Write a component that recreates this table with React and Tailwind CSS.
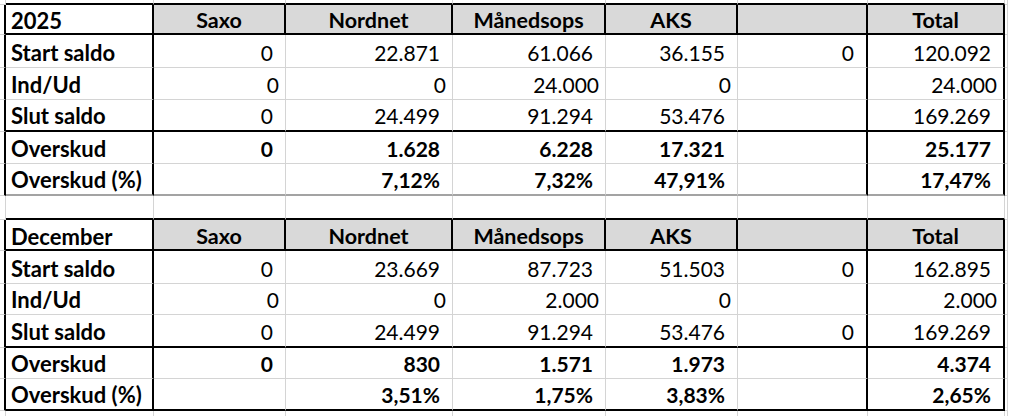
import React from "react";

const R = {
  g: "border-r border-r-[#d4d4d4]",
  k: "border-r-2 border-r-black",
  n: "",
};
const B = {
  g: "border-b border-b-[#d4d4d4]",
  k: "border-b-2 border-b-black",
  d: "border-b-2 border-b-[#a3a3a3]",
  n: "",
};

const HEAD = ["Saxo", "Nordnet", "Månedsops", "AKS", "", "Total"];

const tables = [
  {
    title: "2025",
    rows: [
      { label: "Start saldo", vals: ["0", "22.871", "61.066", "36.155", "0", "120.092"], h: "h-[33px]", b: "g" },
      { label: "Ind/Ud", vals: ["0", "0", "24.000", "0", "", "24.000"], h: "h-[32px]", b: "g", tight: true },
      { label: "Slut saldo", vals: ["0", "24.499", "91.294", "53.476", "", "169.269"], h: "h-[32px]", b: "k" },
      { label: "Overskud", vals: ["0", "1.628", "6.228", "17.321", "", "25.177"], h: "h-[32px]", b: "g", bold: true },
      { label: "Overskud (%)", vals: ["", "7,12%", "7,32%", "47,91%", "", "17,47%"], h: "h-[32px]", b: "d", bold: true },
    ],
    headH: "h-[30px]",
  },
  {
    title: "December",
    rows: [
      { label: "Start saldo", vals: ["0", "23.669", "87.723", "51.503", "0", "162.895"], h: "h-[33px]", b: "g" },
      { label: "Ind/Ud", vals: ["0", "0", "2.000", "0", "", "2.000"], h: "h-[31px]", b: "g", tight: true },
      { label: "Slut saldo", vals: ["0", "24.499", "91.294", "53.476", "0", "169.269"], h: "h-[33px]", b: "k" },
      { label: "Overskud", vals: ["0", "830", "1.571", "1.973", "", "4.374"], h: "h-[31px]", b: "g", bold: true },
      { label: "Overskud (%)", vals: ["", "3,51%", "1,75%", "3,83%", "", "2,65%"], h: "h-[32px]", b: "k", bold: true },
    ],
    headH: "h-[31px]",
  },
];

const DATA_R = ["k", "g", "g", "g", "g", "k", "k"];

function Cell({ h, r, b, className = "", children }) {
  return (
    <div className={`${h} ${R[r]} ${B[b]} flex items-end overflow-hidden whitespace-nowrap ${className}`}>
      {children}
    </div>
  );
}

function StubRow({ h, b }) {
  return (
    <>
      <Cell h={h} r="g" b="g" />
      {DATA_R.map((_, i) => (
        <Cell key={i} h={h} r="g" b={b} />
      ))}
      <Cell h={h} r="g" b="g" />
    </>
  );
}

function Table({ t }) {
  return (
    <>
      <Cell h={t.headH} r="k" b="g" />
      <Cell h={t.headH} r="k" b="k" className="justify-start pl-[5px] pb-[2px] font-bold text-[22px]">
        {t.title}
      </Cell>
      {HEAD.map((hd, i) => (
        <Cell key={i} h={t.headH} r="k" b="k" className="justify-center pb-[2px] font-bold bg-[#d9d9d9] text-[21.5px]">
          {hd}
        </Cell>
      ))}
      <Cell h={t.headH} r="g" b="g" />
      {t.rows.map((row, ri) => (
        <React.Fragment key={ri}>
          <Cell h={row.h} r="k" b="g" />
          <Cell h={row.h} r="k" b={row.b} className="justify-start pl-[5px] pb-[4px] font-bold text-[22px]">
            {row.label}
          </Cell>
          {row.vals.map((v, ci) => (
            <Cell
              key={ci}
              h={row.h}
              r={DATA_R[ci + 1]}
              b={row.b}
              className={`justify-end pb-[4px] ${row.tight ? "pr-[6px]" : "pr-[12px]"} ${row.bold ? "font-bold" : ""}`}
            >
              {v}
            </Cell>
          ))}
          <Cell h={row.h} r="g" b="g" />
        </React.Fragment>
      ))}
    </>
  );
}

export default function App() {
  return (
    <div className="w-[1010px] h-[416px] overflow-hidden bg-white text-black font-['Lato','Liberation_Sans',Arial,sans-serif] text-[21px] leading-[21px]">
      <div className="grid grid-cols-[6px_148px_132px_167px_153px_132px_130px_137px_3px]">
        <StubRow h="h-[5px]" b="k" />
        <Table t={tables[0]} />
        <StubRow h="h-[24px]" b="k" />
        <Table t={tables[1]} />
        <StubRow h="h-[6px]" b="n" />
      </div>
    </div>
  );
}
